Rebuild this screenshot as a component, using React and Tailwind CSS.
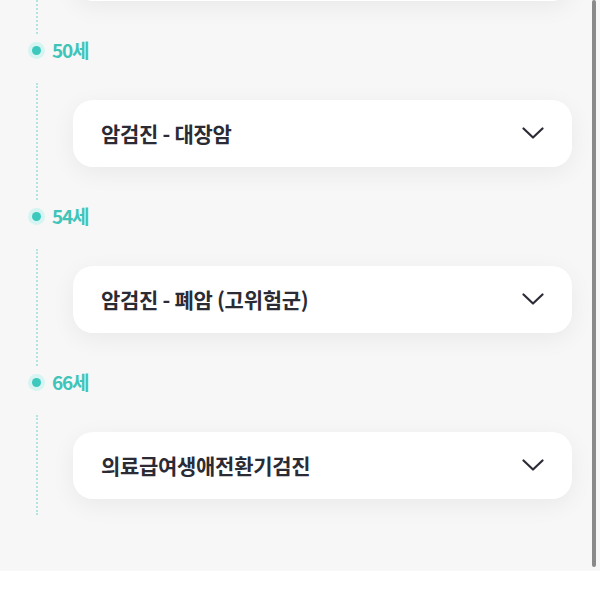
import React from 'react';

const items = [
  { age: '50세', title: '암검진 - 대장암' },
  { age: '54세', title: '암검진 - 폐암 (고위험군)' },
  { age: '66세', title: '의료급여생애전환기검진' },
];

function Chevron() {
  return (
    <svg width="22" height="13" viewBox="0 0 22 13" fill="none">
      <path d="M1.5 1.5L11 10.5L20.5 1.5" stroke="#2c2c36" strokeWidth="2.2" strokeLinecap="round" strokeLinejoin="round" />
    </svg>
  );
}

function Card({ title }) {
  return (
    <div className="h-[67px] bg-white rounded-[20px] shadow-[0_6px_24px_rgba(0,0,0,0.06)] flex items-center justify-between pl-[28px] pr-[28px]">
      <span className="text-[21px] font-bold tracking-[-0.3px] text-[#2b2b35]">{title}</span>
      <Chevron />
    </div>
  );
}

export default function App() {
  return (
    <div className="w-[600px] h-[600px] bg-white overflow-hidden" style={{ fontFamily: '"Noto Sans CJK KR", "Noto Sans", sans-serif' }}>
      <div className="relative h-[571px] bg-[#f7f7f7] overflow-hidden">
        {/* previous card, cut off at top */}
        <div className="flex h-[34px]">
          <div className="ml-[36px] w-0 border-l-2 border-dotted border-[#b3e5e0]" />
          <div className="ml-[35px] w-[499px]">
            <div className="-mt-[66px] h-[67px] bg-white rounded-[20px] shadow-[0_6px_24px_rgba(0,0,0,0.06)]" />
          </div>
        </div>

        {items.map((item, i) => (
          <div key={item.age}>
            <div className="flex items-center h-[32px]">
              <div className="ml-[28px] w-[17px] h-[17px] rounded-full bg-[#d6f4f1] flex items-center justify-center">
                <div className="w-[9px] h-[9px] rounded-full bg-[#3cc8bc]" />
              </div>
              <span className="ml-[7px] text-[19px] font-bold tracking-[-1.2px] text-[#3fc4b9]">{item.age}</span>
            </div>
            <div className="flex mt-[17px]">
              <div className="ml-[36px] w-0 border-l-2 border-dotted border-[#b3e5e0]" />
              <div className={`ml-[35px] w-[499px] pt-[17px] ${i === items.length - 1 ? 'pb-[16px]' : 'pb-[33px]'}`}>
                <Card title={item.title} />
              </div>
            </div>
          </div>
        ))}

        {/* scrollbar */}
        <div className="absolute top-0 right-[4px] w-[4px] h-[567px] rounded-full bg-[#8a8a8a]" />
      </div>
    </div>
  );
}
